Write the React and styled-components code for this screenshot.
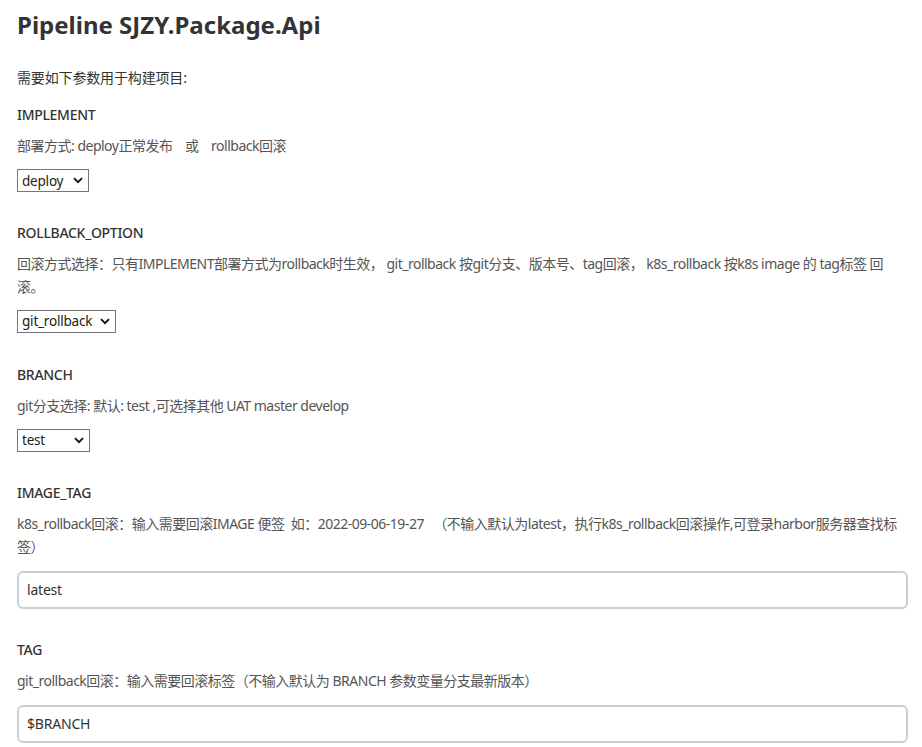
import React from "react";
import styled, { createGlobalStyle } from "styled-components";

const Global = createGlobalStyle`
  html, body { margin: 0; padding: 0; background: #fff; }
  body {
    font-family: "Segoe UI", "Noto Sans", "Noto Sans CJK SC", sans-serif;
    font-size: 14px;
    color: #333;
  }
`;

const Page = styled.div`
  padding: 6px 14px 0 17px;
  display: flex;
  flex-direction: column;
`;

const Title = styled.h1`
  margin: 0;
  font-size: 24px;
  line-height: 38px;
  font-weight: 700;
  color: #333;
`;

const Intro = styled.p`
  margin: 22px 0 0;
  font-size: 14px;
  line-height: 23px;
  color: #333;
  letter-spacing: -0.15px;
`;

const Param = styled.section`
  display: flex;
  flex-direction: column;
  margin-top: ${(p) => p.$top}px;
`;

const Label = styled.div`
  font-size: 14px;
  line-height: 23px;
  font-weight: 500;
  color: #333;
  letter-spacing: -0.3px;
`;

const Desc = styled.div`
  margin-top: 8px;
  font-size: 14px;
  line-height: 23px;
  color: #555;
  white-space: pre-wrap;
  letter-spacing: -0.5px;
`;

const SelectWrap = styled.div`
  position: relative;
  margin-top: 12px;
  align-self: flex-start;
  width: ${(p) => p.$w}px;
  height: 23px;
`;

const Select = styled.select`
  appearance: none;
  -webkit-appearance: none;
  width: 100%;
  height: 100%;
  box-sizing: border-box;
  border: 1px solid #767676;
  border-radius: 0;
  background: #fff;
  padding: 0 0 0 4px;
  font-family: inherit;
  font-size: 13.5px;
  letter-spacing: -0.2px;
  color: #222;
  outline: none;
`;

const Chevron = styled.svg`
  position: absolute;
  right: 6px;
  top: 8px;
  pointer-events: none;
`;

const TextInput = styled.input`
  margin-top: 13px;
  height: 38px;
  box-sizing: border-box;
  width: 100%;
  border: 2px solid #c7d0d5;
  border-radius: 6px;
  padding: 0 8px;
  font-family: inherit;
  font-size: 14px;
  letter-spacing: -0.2px;
  color: #333;
  background: #fff;
  outline: none;
`;

function Dropdown({ width, value, options }) {
  return (
    <SelectWrap $w={width}>
      <Select defaultValue={value}>
        {options.map((o) => (
          <option key={o} value={o}>{o}</option>
        ))}
      </Select>
      <Chevron width="10" height="7" viewBox="0 0 10 7">
        <path d="M1 1.2 L5 5.2 L9 1.2" fill="none" stroke="#111" strokeWidth="1.9" />
      </Chevron>
    </SelectWrap>
  );
}

export default function App() {
  return (
    <>
      <Global />
      <Page>
        <Title>Pipeline SJZY.Package.Api</Title>
        <Intro>需要如下参数用于构建项目:</Intro>

        <Param $top={14}>
          <Label>IMPLEMENT</Label>
          <Desc>{"部署方式: deploy正常发布    或    rollback回滚"}</Desc>
          <Dropdown width={72} value="deploy" options={["deploy", "rollback"]} />
        </Param>

        <Param $top={28.5}>
          <Label>ROLLBACK_OPTION</Label>
          <Desc>回滚方式选择：只有IMPLEMENT部署方式为rollback时生效， git_rollback 按git分支、版本号、tag回滚， k8s_rollback 按k8s image 的 tag标签 回滚。</Desc>
          <Dropdown width={99} value="git_rollback" options={["git_rollback", "k8s_rollback"]} />
        </Param>

        <Param $top={30}>
          <Label>BRANCH</Label>
          <Desc>git分支选择: 默认: test ,可选择其他 UAT master develop</Desc>
          <Dropdown width={73} value="test" options={["test", "UAT", "master", "develop"]} />
        </Param>

        <Param $top={29}>
          <Label>IMAGE_TAG</Label>
          <Desc>{"k8s_rollback回滚：输入需要回滚IMAGE 便签  如：2022-09-06-19-27   （不输入默认为latest，执行k8s_rollback回滚操作,可登录harbor服务器查找标签）"}</Desc>
          <TextInput defaultValue="latest" />
        </Param>

        <Param $top={29}>
          <Label>TAG</Label>
          <Desc>git_rollback回滚：输入需要回滚标签（不输入默认为 BRANCH 参数变量分支最新版本）</Desc>
          <TextInput defaultValue="$BRANCH" />
        </Param>
      </Page>
    </>
  );
}
